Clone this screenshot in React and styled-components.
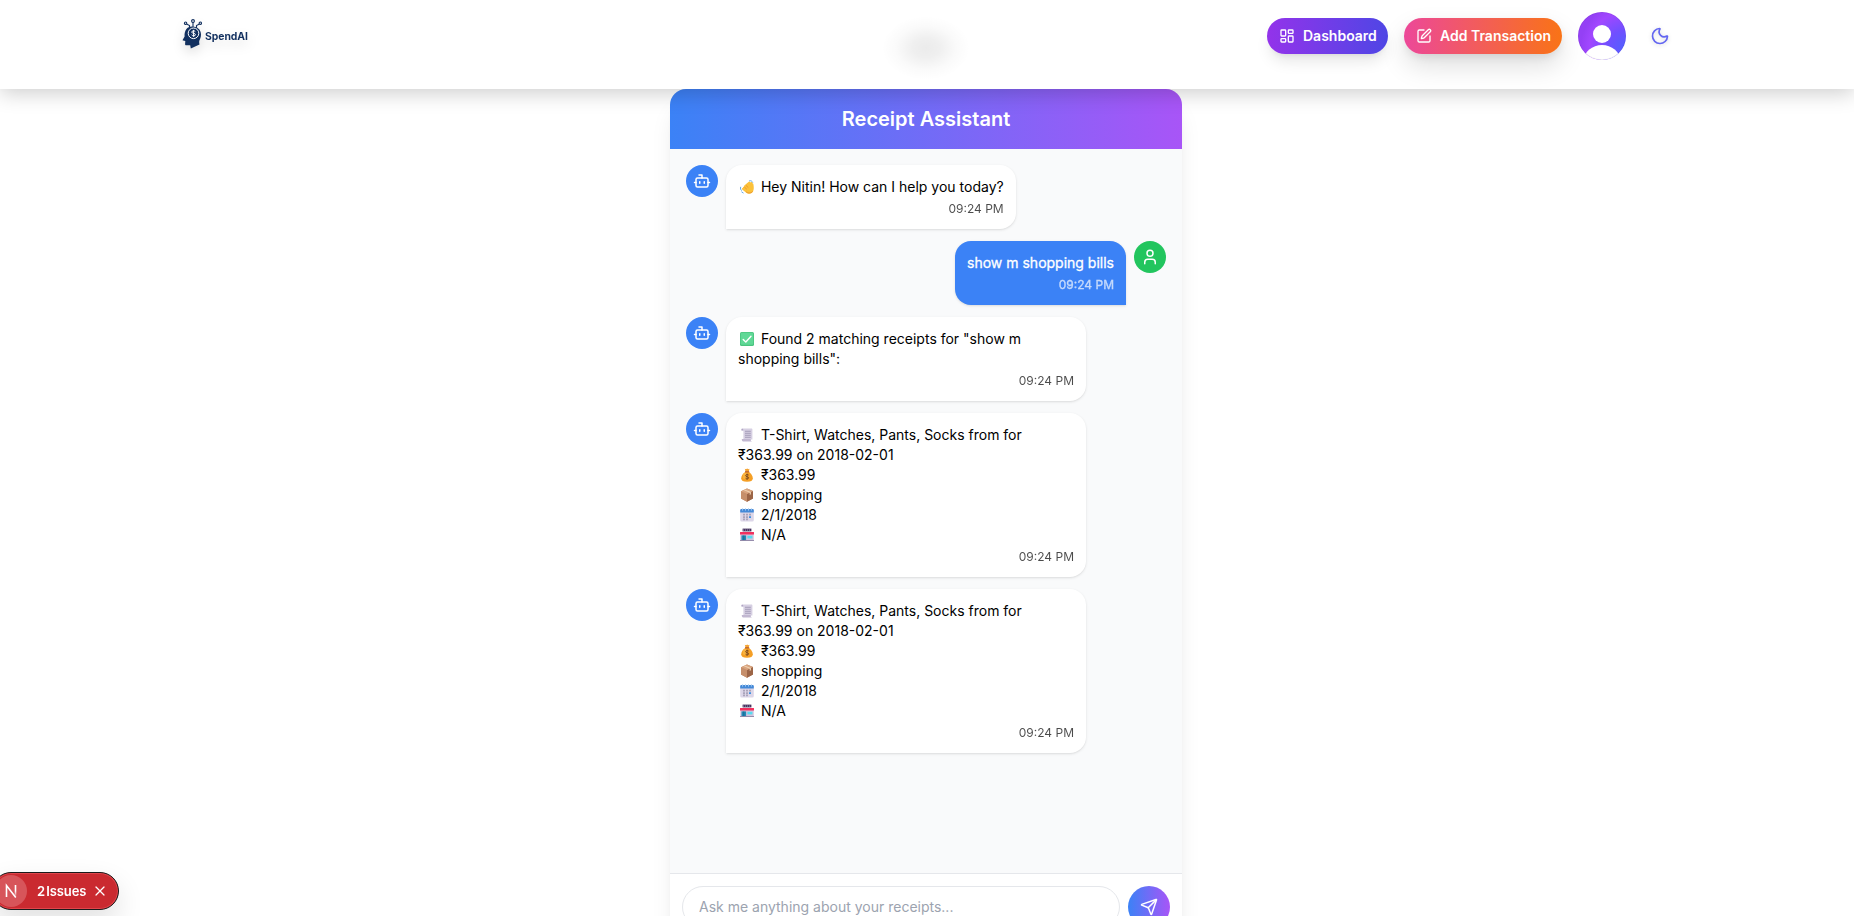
import React from "react";
import styled, { createGlobalStyle, css } from "styled-components";
import { LayoutDashboard, SquarePen, Moon, Bot, User, Send, X } from "lucide-react";

const GlobalStyle = createGlobalStyle`
  *, *::before, *::after { box-sizing: border-box; }
  html, body { margin: 0; height: 100%; overflow: hidden; background: #fff; }
  body { font-family: Inter, "Noto Sans", sans-serif; color: #000; }
  button, input { font-family: inherit; }
`;

const Page = styled.div`
  height: 100vh;
  display: flex;
  flex-direction: column;
  overflow: hidden;
`;

const TopBar = styled.header`
  position: relative;
  z-index: 2;
  width: 100%;
  height: 89px;
  flex: none;
  padding-right: 2px;
  display: flex;
  justify-content: center;
  background:
    radial-gradient(ellipse 44px 32px at 926px 48px, rgba(0, 0, 0, 0.08) 0%, rgba(0, 0, 0, 0.062) 30%, rgba(0, 0, 0, 0.02) 68%, transparent 100%),
    #fff;
  box-shadow: 0 4px 20px rgba(0, 0, 0, 0.2);
`;

const TopBarInner = styled.div`
  width: 1536px;
  padding: 12px 16px 0;
  display: flex;
  align-items: flex-start;
  justify-content: space-between;
`;

const Brand = styled.div`
  height: 48px;
  padding-left: 8px;
  display: flex;
  align-items: center;
  gap: 3px;
  color: #12305f;
  font-size: 10.4px;
  font-weight: 700;
  letter-spacing: -0.05px;
  filter: drop-shadow(0 5px 6px rgba(0, 0, 0, 0.12));

  svg { display: block; margin-top: -4px; }
  span { padding-top: 1px; }
`;

const Actions = styled.nav`
  height: 48px;
  display: flex;
  align-items: center;
  gap: 16px;
`;

const PillButton = styled.button`
  height: 36px;
  width: ${(p) => p.$width}px;
  padding: 0 12px;
  border: 0;
  border-radius: 18px;
  display: flex;
  align-items: center;
  gap: 8px;
  color: #fff;
  font-size: 14px;
  font-weight: 600;
  line-height: 20px;
  white-space: nowrap;
  background: linear-gradient(to right, ${(p) => p.$from}, ${(p) => p.$to});
  box-shadow: ${(p) =>
    p.$raised
      ? "0 12px 26px rgba(0,0,0,.13), 0 4px 10px -2px rgba(0,0,0,.1)"
      : "0 10px 15px -3px rgba(0,0,0,.1), 0 4px 6px -4px rgba(0,0,0,.1)"};

  svg { flex: none; }
`;

const Avatar = styled.div`
  width: 48px;
  height: 48px;
  border-radius: 50%;
  overflow: hidden;
  svg { display: block; }
`;

const ThemeButton = styled.button`
  width: 36px;
  height: 36px;
  padding: 8px;
  border: 0;
  background: none;
  color: #6366f1;
  filter: drop-shadow(0 1px 2px rgba(0, 0, 0, 0.15));
  svg { display: block; }
`;

const ChatArea = styled.div`
  flex: 1;
  padding-right: 2px;
  display: flex;
  justify-content: center;
  align-items: flex-start;
`;

const ChatCard = styled.main`
  width: 512px;
  height: 852px;
  flex: none;
  display: flex;
  flex-direction: column;
  border-radius: 16px;
  overflow: hidden;
  background: #fff;
  box-shadow: 0 20px 25px -5px rgba(0, 0, 0, 0.1), 0 8px 10px -6px rgba(0, 0, 0, 0.1);
`;

const ChatTitle = styled.h1`
  margin: 0;
  padding: 16px;
  flex: none;
  text-align: center;
  color: #fff;
  font-size: 20px;
  font-weight: 600;
  line-height: 28px;
  background: linear-gradient(to right, #3b82f6, #a855f7);
`;

const MessageList = styled.div`
  height: 724px;
  flex: none;
  padding: 16px;
  display: flex;
  flex-direction: column;
  gap: 12px;
  background: #f9fafb;
`;

const MessageRow = styled.div`
  display: flex;
  align-items: flex-start;
  gap: 8px;
  justify-content: ${(p) => (p.$mine ? "flex-end" : "flex-start")};
`;

const RoundBadge = styled.div`
  width: 32px;
  height: 32px;
  flex: none;
  border-radius: 50%;
  display: flex;
  align-items: center;
  justify-content: center;
  color: #fff;
  background: ${(p) => (p.$mine ? "#22c55e" : "#3b82f6")};
`;

const Bubble = styled.div`
  max-width: 360px;
  padding: 12px;
  font-size: 14px;
  line-height: 20px;
  box-shadow: 0 1px 3px rgba(0, 0, 0, 0.1), 0 1px 2px -1px rgba(0, 0, 0, 0.1);
  ${(p) =>
    p.$mine
      ? css`
          color: #fff;
          background: #3b82f6;
          border-radius: 16px 16px 0 16px;
          -webkit-text-stroke: 0.3px currentColor;
        `
      : css`
          color: #000;
          background: #fff;
          border-radius: 16px 16px 16px 0;
        `}
`;

const Time = styled.div`
  margin-top: 4px;
  text-align: right;
  font-size: 12px;
  line-height: 16px;
  opacity: 0.7;
`;

const EmojiSvg = styled.svg`
  display: inline-block;
  width: 14px;
  height: 14px;
  margin: 0 3px 0 2px;
  vertical-align: -2px;
`;

const Composer = styled.form`
  flex: 1;
  padding: 12px;
  display: flex;
  align-items: flex-start;
  gap: 8px;
  border-top: 1px solid #e5e7eb;
  background: #fff;
`;

const Prompt = styled.input`
  flex: 1;
  height: 42px;
  padding: 0 16px 1px;
  border: 1px solid #e5e7eb;
  border-radius: 21px;
  outline: 0;
  font-size: 14px;
  background: #fff;
  &::placeholder { color: #9ca3af; opacity: 1; }
`;

const SendButton = styled.button`
  width: 42px;
  height: 42px;
  padding: 0;
  border: 0;
  border-radius: 50%;
  display: flex;
  align-items: center;
  justify-content: center;
  color: #fff;
  background: linear-gradient(to right, #3b82f6, #a855f7);
`;

const IssuesToast = styled.div`
  position: fixed;
  z-index: 3;
  left: -8px;
  bottom: 6px;
  width: 127px;
  height: 38px;
  padding: 0 10px 0 2px;
  display: flex;
  align-items: center;
  border: 1px solid #1a1a1a;
  border-radius: 19px;
  color: #fff;
  background: #ca2a30;
  box-shadow: inset 0 0 0 1px #e0454b, 0 12px 28px rgba(0, 0, 0, 0.12);
`;

const NextMark = styled.div`
  width: 32px;
  height: 32px;
  flex: none;
  border-radius: 50%;
  background: #d7555a;
  svg { display: block; }
`;

const IssuesText = styled.span`
  flex: 1;
  margin-left: 10px;
  font-size: 13px;
  font-weight: 600;
  letter-spacing: -0.08px;
  word-spacing: -2px;
  white-space: nowrap;
`;

const emojiArt = {
  wave: (
    <>
      <path d="M4.600 5.200 8.800 1.800c.7-.5 1.500 0 1.300.8l1.300-.6c.9-.2 1.400.6 1 1.300l.9.500c.6 2.800.8 6-.6 8.200-1.500 2.200-5 2-6.800.4L2.200 9.400c-.8-.9.2-1.800 1-1.200-.8-1.100.2-2 1.100-1.200-.4-.7-.3-1.400.3-1.800z" fill="#fbc13a" />
      <path d="M4.300 7 6.800 9.200M6 5.400 8.300 7.600M12.700 11.400c-1.500 2.100-4.900 1.900-6.700.3" stroke="#e8912d" strokeWidth=".8" fill="none" />
      <path d="M9.600.7c1.400-.2 2.500.4 3 1.500M.6 7.200c-.4 1.300 0 2.500.8 3.200M1.800 12l1.400.9" stroke="#62a8e5" strokeWidth="1" fill="none" strokeLinecap="round" />
    </>
  ),
  check: (
    <>
      <rect width="14" height="14" rx="1.6" fill="#4ac47f" />
      <rect x=".8" y=".8" width="12.4" height="12" rx="1.2" fill="#5fd896" />
      <path d="M3.2 7.4 5.800 10l5.200-5.800" stroke="#fff" strokeWidth="1.4" fill="none" strokeLinecap="round" strokeLinejoin="round" />
    </>
  ),
  receipt: (
    <>
      <path d="M2 .600h9.400c.6 0 1 .4 1 1v9.800H3.400V2.600H1.600C1.200 1.800 1.400.900 2 .600z" fill="#d6cfe2" />
      <path d="M3.400 2.600H1.600c-.3-.8-.1-1.500.4-1.900.7 0 1.400.6 1.400 1.900z" fill="#b0a5c3" />
      <path d="M1.800 11h9v1.200c.1.700.6 1.200 1.200 1.200H3.100c-.9 0-1.400-.9-1.300-2.400z" fill="#c2b8d1" />
      <path d="M5 3.300h5.800M5 5.300h5.800M5 7.300h5.800M5 9.300h5.800" stroke="#9a90b0" strokeWidth=".8" />
    </>
  ),
  money: (
    <>
      <path d="M4.800.7 6 1.200 7.200.5l1.200.7 1.100-.5-.8 3H5.600z" fill="#f4a332" />
      <path d="M5.400 3.700h3.400c2.300 1.800 4 4.200 4 6.600 0 2.400-1.900 3.500-5.800 3.500s-5.800-1.100-5.800-3.500c0-2.400 1.800-4.800 4.200-6.600z" fill="#f59f25" />
      <ellipse cx="5" cy="8" rx="2.300" ry="3.200" fill="#fbbb48" opacity=".7" />
      <path d="M5 3.800h4.200" stroke="#b35528" strokeWidth="1.1" />
      <path d="M8.700 7.100c-.7-.9-3.100-.8-3.100.6 0 1.300 3.100.7 3.100 2.100 0 1.300-2.500 1.400-3.200.4M7.100 5.700v6" stroke="#76451f" strokeWidth=".9" fill="none" />
    </>
  ),
  box: (
    <>
      <path d="M7 .4 13 3v7.400l-6 3.300-6-3.300V3.300z" fill="#b97f5c" />
      <path d="M1 3.300 7 6v7.700l-6-3.300z" fill="#c68f6b" />
      <path d="M7 6l6-3v7.400l-6 3.300z" fill="#9c6547" />
      <path d="M7 .4 13 3 7 6 1 3.300z" fill="#d8a47f" />
      <path d="M3.400 2.100 9.700 4.700v2.200l1.200-.6V4.100L4.700 1.500z" fill="#f0d2b2" />
    </>
  ),
  calendar: (
    <>
      <rect x=".2" y="1.200" width="13.600" height="12.400" rx="1.500" fill="#dcd6e8" />
      <path d="M.2 4.600V2.400C.2 1.500.800 1 1.600 1h10.800c.8 0 1.400.5 1.400 1.400v2.200z" fill="#4489d8" />
      <path d="M2.600.2v2.400M5.500.2v2.400M8.500.2v2.400M11.400.2v2.400" stroke="#a9cdf0" strokeWidth=".9" />
      <path d="M3 5.800h2v1.800H3zM6 5.800h2v1.800H6zM9 5.800h2v1.800H9zM3 8.200h2V10H3zM6 8.200h2V10H6zM3 10.600h2v1.600H3zM6 10.600h2v1.600H6z" fill="#aaa4ba" />
      <path d="M9 8.200h2V10H9z" fill="#3f8fe0" />
    </>
  ),
  store: (
    <>
      <rect x="2.600" y=".600" width="8.800" height="2.800" fill="#46345f" />
      <path d="M3.500 1.500v1.200M5.500 1.500v1.200M7.500 1.500v1.200M9.500 1.500v1.200" stroke="#b9aecb" strokeWidth=".7" />
      <rect x=".3" y="6" width="13.400" height="6.500" fill="#cfc5de" />
      <rect y="4" width="14" height="2.600" rx=".3" fill="#f2305e" />
      <rect x="1.500" y="7.400" width="4.600" height="5" fill="#2389b5" />
      <path d="M3.800 7.400v5" stroke="#174d73" strokeWidth=".6" />
      <rect x="7.400" y="7.800" width="5" height="2.600" fill="#55dcf2" />
      <rect y="12" width="14" height=".9" fill="#8d83a4" />
    </>
  ),
};

const Emoji = ({ name }) => (
  <EmojiSvg viewBox="0 0 14 14" aria-hidden="true">
    {emojiArt[name]}
  </EmojiSvg>
);

const receiptLines = [
  { icon: "receipt", text: "T-Shirt, Watches, Pants, Socks from for ₹363.99 on 2018-02-01" },
  { icon: "money", text: "₹363.99" },
  { icon: "box", text: "shopping" },
  { icon: "calendar", text: "2/1/2018" },
  { icon: "store", text: "N/A" },
];

const messages = [
  { lines: [{ icon: "wave", text: "Hey Nitin! How can I help you today?" }] },
  { mine: true, lines: [{ text: "show m shopping bills" }] },
  { lines: [{ icon: "check", text: 'Found 2 matching receipts for "show m shopping bills":' }] },
  { lines: receiptLines },
  { lines: receiptLines },
];

const BrandMark = () => (
  <svg width="20" height="30" viewBox="0 0 20 30">
    <g fill="none" stroke="#12305f" strokeWidth="1.1">
      <path d="M11 9V3M7.500 9V6.500L4.500 5M14.500 9V6.500L17.500 5" />
      <circle cx="11" cy="2" r="1.400" />
      <circle cx="3.600" cy="4.200" r="1.200" />
      <circle cx="18.300" cy="4.200" r="1.200" />
    </g>
    <path d="M10 7.500c5.500 0 9 3.200 9 8 0 3.200-1 4.300-1.700 6.200-.3 1.600 0 2.500.2 3.700L8.800 29.500l-.6-3.200H4.400c-1 0-1.400-.6-1.300-1.600l.2-2.600-2.200-.5c-.5-.2-.5-.7-.2-1.100l1.700-3C2.200 11.500 5 7.500 10 7.500z" fill="#12305f" />
    <circle cx="11.500" cy="14.300" r="5.300" fill="none" stroke="#fff" strokeWidth="1" />
    <path d="M13.300 12.600c-.8-1.200-3.600-.9-3.600.5 0 1.700 3.800.8 3.800 2.600 0 1.400-3 1.600-3.900.2M11.600 10.900v7" fill="none" stroke="#fff" strokeWidth="1" />
  </svg>
);

const AvatarArt = () => (
  <svg width="48" height="48" viewBox="0 0 48 48">
    <defs>
      <radialGradient id="avatarFill" cx="1" cy="0.75" r="0.95">
        <stop offset="0" stopColor="#5260ff" />
        <stop offset="0.4" stopColor="#7050ff" />
        <stop offset="0.8" stopColor="#a147ff" />
        <stop offset="1" stopColor="#9440f5" />
      </radialGradient>
    </defs>
    <rect width="48" height="48" fill="url(#avatarFill)" />
    <circle cx="24" cy="22" r="9" fill="#fff" />
    <ellipse cx="24" cy="48" rx="18" ry="15" fill="#fff" />
    <circle cx="24" cy="24" r="23.700" fill="none" stroke="#000" strokeOpacity="0.1" strokeWidth="0.600" />
  </svg>
);

export default function App() {
  return (
    <Page>
      <GlobalStyle />
      <TopBar>
        <TopBarInner>
          <Brand>
            <BrandMark />
            <span>SpendAI</span>
          </Brand>
          <Actions>
            <PillButton $width={121} $from="#9333ea" $to="#4f46e5">
              <LayoutDashboard size={16} />
              Dashboard
            </PillButton>
            <PillButton $width={158} $from="#ec4899" $to="#f97316" $raised>
              <SquarePen size={16} />
              Add Transaction
            </PillButton>
            <Avatar>
              <AvatarArt />
            </Avatar>
            <ThemeButton aria-label="Toggle theme">
              <Moon size={20} />
            </ThemeButton>
          </Actions>
        </TopBarInner>
      </TopBar>

      <ChatArea>
        <ChatCard>
          <ChatTitle>Receipt Assistant</ChatTitle>
          <MessageList>
            {messages.map((message, i) => (
              <MessageRow key={i} $mine={message.mine}>
                {!message.mine && (
                  <RoundBadge>
                    <Bot size={18} />
                  </RoundBadge>
                )}
                <Bubble $mine={message.mine}>
                  {message.lines.map((line, j) => (
                    <div key={j}>
                      {line.icon && <Emoji name={line.icon} />} {line.text}
                    </div>
                  ))}
                  <Time>09:24 PM</Time>
                </Bubble>
                {message.mine && (
                  <RoundBadge $mine>
                    <User size={18} />
                  </RoundBadge>
                )}
              </MessageRow>
            ))}
          </MessageList>
          <Composer>
            <Prompt placeholder="Ask me anything about your receipts..." />
            <SendButton type="button" aria-label="Send">
              <Send size={18} />
            </SendButton>
          </Composer>
        </ChatCard>
      </ChatArea>

      <IssuesToast>
        <NextMark>
          <svg width="32" height="32" viewBox="0 0 32 32" fill="none">
            <defs>
              <linearGradient id="nextStroke" x1="0" y1="10" x2="0" y2="22" gradientUnits="userSpaceOnUse">
                <stop offset="0.5" stopColor="#fff" />
                <stop offset="1" stopColor="#fff" stopOpacity="0" />
              </linearGradient>
            </defs>
            <path d="M11.500 22V10.500L20.800 22.500" stroke="#fff" strokeWidth="1.600" />
            <path d="M20.500 10v11" stroke="url(#nextStroke)" strokeWidth="1.600" />
          </svg>
        </NextMark>
        <IssuesText>2 Issues</IssuesText>
        <X size={16} strokeWidth={1.8} />
      </IssuesToast>
    </Page>
  );
}
